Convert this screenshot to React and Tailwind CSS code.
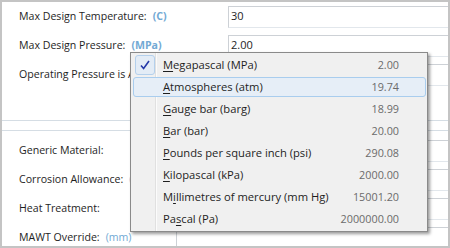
import React from 'react';

const font = { fontFamily: '"Open Sans", "Noto Sans", sans-serif' };

const units = [
  { pre: '', key: 'M', post: 'egapascal (MPa)', value: '2.00', checked: true },
  { pre: '', key: 'A', post: 'tmospheres (atm)', value: '19.74', hover: true },
  { pre: '', key: 'G', post: 'auge bar (barg)', value: '18.99' },
  { pre: '', key: 'B', post: 'ar (bar)', value: '20.00' },
  { pre: '', key: 'P', post: 'ounds per square inch (psi)', value: '290.08' },
  { pre: '', key: 'K', post: 'ilopascal (kPa)', value: '2000.00' },
  { pre: 'M', key: 'i', post: 'llimetres of mercury (mm Hg)', value: '15001.20' },
  { pre: 'Pa', key: 's', post: 'cal (Pa)', value: '2000000.00' },
];

function Unit({ children, bold }) {
  return (
    <span className={`ml-[6px] text-[#72a9d4] ${bold ? 'font-bold' : ''}`}>{children}</span>
  );
}

function TopRow({ label, unit, value }) {
  return (
    <div className="flex items-center h-[29px]">
      <div className="w-[226px] pl-[17px] whitespace-nowrap">
        {label}
        {unit && <Unit bold>{unit}</Unit>}
      </div>
      <div className="flex-1 h-[22px] border border-r-0 border-[#cdd1d6] border-b-[#e2e7ec] flex items-center pl-[2px] text-[11px]">
        {value}
      </div>
    </div>
  );
}

function LowRow({ label, unit }) {
  return (
    <div className="flex items-center h-[29px]">
      <div className="w-[174px] pl-[17px] whitespace-nowrap">
        {label}
        {unit && <Unit>{unit}</Unit>}
      </div>
      <div className="flex-1 h-[22px] border border-r-0 border-[#cdd1d6] border-b-[#e2e7ec]" />
    </div>
  );
}

function CheckIcon() {
  return (
    <svg width="12" height="12" viewBox="0 0 12 12">
      <path d="M2 6.5 L4.6 9.5 L10 2" fill="none" stroke="#2438a8" strokeWidth="1.6" />
    </svg>
  );
}

export default function App() {
  return (
    <div
      className="relative w-[450px] h-[248px] overflow-hidden bg-white border-2 border-[#c4c4c4] text-[10.6px] text-[#1e1e1e]"
      style={font}
    >
      <TopRow label="Max Design Temperature:" unit="(C)" value="30" />
      <TopRow label="Max Design Pressure:" unit="(MPa)" value="2.00" />
      <TopRow label="Operating Pressure is Absolute:" value="" />

      <div className="h-[31px]" />
      <div className="border-t border-[#d5dde4] h-[10px]" />
      <div className="border-t border-[#d5dde4] h-[6px]" />

      <LowRow label="Generic Material:" />
      <LowRow label="Corrosion Allowance:" unit="(mm)" />
      <LowRow label="Heat Treatment:" />
      <LowRow label="MAWT Override:" unit="(mm)" />

      {/* unit dropdown menu */}
      <div className="absolute left-[128px] top-[50px] w-[298px] h-[180px] bg-[#f0f0f0] border border-[#8a8a8a] p-[1px] shadow-[2px_2px_3px_rgba(0,0,0,0.4)]">
        <div className="absolute left-[24px] top-0 bottom-0 w-[2px] border-l border-[#e0e0e0] bg-white/70" />
        {units.map((u) => (
          <div key={u.value} className="relative h-[22px] flex items-center">
            {u.hover && (
              <div className="absolute left-[1px] right-0 top-[1px] bottom-[1px] rounded-[3px] border border-[#a9cdee] bg-[#e6eef7]" />
            )}
            <div className="relative w-[24px] h-full flex items-center justify-center">
              {u.checked && (
                <div className="w-[20px] h-[20px] ml-[2px] rounded-[3px] border border-[#b4d0ec] bg-[#e3ecf6] flex items-center justify-center">
                  <CheckIcon />
                </div>
              )}
            </div>
            <div className="relative pl-[7px] flex-1 whitespace-nowrap text-[11.2px]">
              {u.pre}
              <span className="underline underline-offset-2">{u.key}</span>
              {u.post}
            </div>
            <div className="relative pr-[27px] text-[10.8px] text-[#6b6b6b]">{u.value}</div>
          </div>
        ))}
      </div>
    </div>
  );
}
